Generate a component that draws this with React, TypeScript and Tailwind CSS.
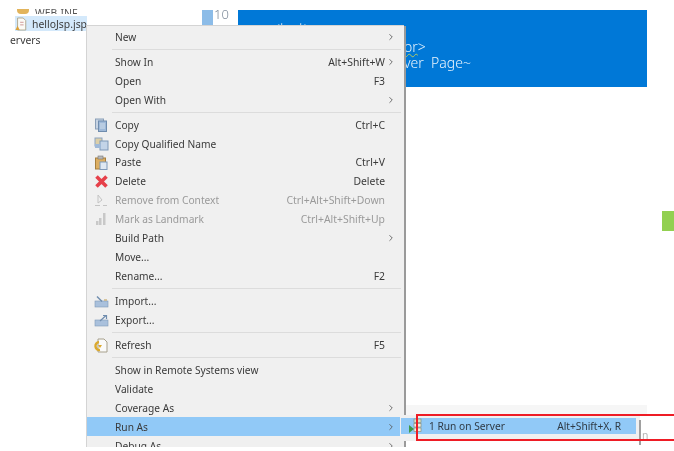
import React from "react";
import { ChevronRight } from "lucide-react";

type Item = { label: string; keys?: string; arrow?: boolean; off?: boolean; active?: boolean; icon?: React.ReactNode };

function CopyIcon() {
  return (
    <svg width="14" height="14" viewBox="0 0 14 14">
      <rect x="1.5" y="1" width="8" height="10" fill="#c6d3e3" stroke="#8a9fb8" />
      <rect x="4.5" y="3" width="8" height="10.5" fill="#9fb9d8" stroke="#6f8cae" />
      <path d="M6 6 H11 M6 8 H11 M6 10 H11" stroke="#dfe8f2" strokeWidth="0.8" />
    </svg>
  );
}
function CopyNameIcon() {
  return (
    <svg width="15" height="14" viewBox="0 0 15 14">
      <rect x="1" y="1" width="7" height="8" fill="#dccfa8" stroke="#8ca3c0" />
      <rect x="6" y="4" width="8" height="9" fill="#c3d4e8" stroke="#7f99b8" />
      <rect x="1" y="7" width="6" height="4" fill="#9fb9d8" />
    </svg>
  );
}
function PasteIcon() {
  return (
    <svg width="14" height="15" viewBox="0 0 14 15">
      <rect x="1.5" y="3" width="10" height="11" fill="#dcae62" stroke="#a77f3d" />
      <rect x="4" y="1" width="5" height="3" fill="#b9b9b9" stroke="#777" strokeWidth="0.6" />
      <rect x="6" y="7" width="7" height="7.5" fill="#dfe8f2" stroke="#7f99b8" />
    </svg>
  );
}
function DeleteIcon() {
  return (
    <svg width="13" height="13" viewBox="0 0 13 13">
      <path d="M1.5 1.5 L11.5 11.5 M11.5 1.5 L1.5 11.5" stroke="#e6404a" strokeWidth="3.6" />
    </svg>
  );
}
function RemoveIcon() {
  return (
    <svg width="14" height="13" viewBox="0 0 14 13" fill="none" stroke="#c4c4c4">
      <path d="M4 1 L8 6 L4 9 Z" />
      <path d="M1 11.5 H6 M9 11.5 H13" />
    </svg>
  );
}
function LandmarkIcon() {
  return (
    <svg width="12" height="14" viewBox="0 0 12 14" fill="#c8c8c8">
      <rect x="8" y="1" width="2.5" height="12" />
      <rect x="4" y="6" width="2.5" height="7" />
      <rect x="1" y="9" width="2.5" height="4" />
    </svg>
  );
}
function ImportIcon() {
  return (
    <svg width="15" height="13" viewBox="0 0 15 13">
      <rect x="1" y="6" width="13" height="6" fill="#a9c0dc" stroke="#7f99b8" strokeWidth="0.6" />
      <path d="M3 1.5 L8 6.5" stroke="#6f8cae" strokeWidth="1.4" fill="none" />
      <path d="M10 5 L13 5" stroke="#c8a867" strokeWidth="1.2" />
    </svg>
  );
}
function ExportIcon() {
  return (
    <svg width="15" height="13" viewBox="0 0 15 13">
      <rect x="1" y="6" width="13" height="6" fill="#a9c0dc" stroke="#7f99b8" strokeWidth="0.6" />
      <path d="M6 7 L12 1.5 M9 1.5 H12.5 V5" stroke="#6f8cae" strokeWidth="1.2" fill="none" />
    </svg>
  );
}
function RefreshIcon() {
  return (
    <svg width="14" height="15" viewBox="0 0 14 15">
      <path d="M4 1 H10 L13 4 V14 H4 Z" fill="#fafafa" stroke="#a7a08c" />
      <path d="M5 4 A4 4 0 1 0 6 12" fill="none" stroke="#dba92e" strokeWidth="2.4" />
      <path d="M4 7 L8 7 L6 10 Z" fill="#dba92e" />
    </svg>
  );
}
function JspIcon() {
  return (
    <svg width="14" height="16" viewBox="0 0 14 16">
      <path d="M3 1 H9.5 L12.5 4 V15 H3 Z" fill="#fbfaf5" stroke="#a99f83" />
      <path d="M6 6 H10 M6 9 H10" stroke="#c98a8a" />
      <path d="M0.5 15 L3 10 L5.5 15 Z" fill="#dca23a" />
    </svg>
  );
}
function ServerIcon() {
  return (
    <svg width="15" height="16" viewBox="0 0 15 16">
      <rect x="6" y="1" width="7" height="3.5" fill="#d9e4c8" stroke="#8b8f7a" strokeWidth="0.7" />
      <rect x="6" y="5.5" width="7" height="3.5" fill="#f4f1e2" stroke="#8b8f7a" strokeWidth="0.7" />
      <rect x="6" y="10" width="7" height="3.5" fill="#f4f1e2" stroke="#8b8f7a" strokeWidth="0.7" />
      <path d="M1 7 L6 11 L1 15 Z" fill="#3f9a4a" />
    </svg>
  );
}

const groups: Item[][] = [
  [{ label: "New", arrow: true }],
  [
    { label: "Show In", keys: "Alt+Shift+W", arrow: true },
    { label: "Open", keys: "F3" },
    { label: "Open With", arrow: true },
  ],
  [
    { label: "Copy", keys: "Ctrl+C", icon: <CopyIcon /> },
    { label: "Copy Qualified Name", icon: <CopyNameIcon /> },
    { label: "Paste", keys: "Ctrl+V", icon: <PasteIcon /> },
    { label: "Delete", keys: "Delete", icon: <DeleteIcon /> },
    { label: "Remove from Context", keys: "Ctrl+Alt+Shift+Down", off: true, icon: <RemoveIcon /> },
    { label: "Mark as Landmark", keys: "Ctrl+Alt+Shift+Up", off: true, icon: <LandmarkIcon /> },
    { label: "Build Path", arrow: true },
    { label: "Move..." },
    { label: "Rename...", keys: "F2" },
  ],
  [
    { label: "Import...", icon: <ImportIcon /> },
    { label: "Export...", icon: <ExportIcon /> },
  ],
  [{ label: "Refresh", keys: "F5", icon: <RefreshIcon /> }],
  [
    { label: "Show in Remote Systems view" },
    { label: "Validate" },
    { label: "Coverage As", arrow: true },
    { label: "Run As", arrow: true, active: true },
    { label: "Debug As", arrow: true },
  ],
];

function Row({ item }: { item: Item }) {
  return (
    <div className={`flex h-[18.95px] items-center ${item.active ? "bg-[#91c9f7]" : ""} ${item.off ? "text-[#9a9a9a]" : "text-[#3a3a3a]"}`}>
      <span className="flex w-[28px] shrink-0 justify-center">{item.icon}</span>
      <span className="flex-1 whitespace-nowrap text-[10.2px]">{item.label}</span>
      <span className="whitespace-nowrap">{item.keys}</span>
      <span className="mr-[7px] flex w-[12px] shrink-0 justify-center">
        {item.arrow && <ChevronRight size={10} strokeWidth={2} className="text-[#555]" />}
      </span>
    </div>
  );
}

export default function App() {
  return (
    <div className="relative h-[451px] w-[674px] overflow-hidden bg-white font-['Noto_Sans','Noto_Sans_CJK_KR',sans-serif] text-[10.4px] leading-none blur-[0.5px]">
      <div className="flex h-full">
        {/* project tree */}
        <div className="w-[202px] shrink-0 pt-[8px] text-[#3c3c3c]">
          <div className="flex h-[6px] items-end overflow-hidden pl-[17px]">
            <span className="mr-[6px] h-[5px] w-[12px] rounded-b-sm bg-[#e2b45c]" />
            <span className="translate-y-[4px] text-[#555]">WEB-INF</span>
          </div>
          <div className="ml-[15px] mt-[2px] flex h-[15px] w-[72px] items-center gap-[5px] bg-[#d4e9fb]">
            <JspIcon />
            <span className="translate-y-[0.5px]">helloJsp.jsp</span>
          </div>
          <div className="mt-[2px] h-[14px] pl-[10px] leading-[14px]">ervers</div>
        </div>
        {/* line numbers */}
        <div className="mt-[10px] h-[15px] w-[36px] shrink-0 overflow-hidden">
          <div className="flex">
            <span className="h-[15px] w-[11px] bg-[#8cbce8]" />
            <div className="ml-[1px] text-[13px] font-light leading-[15px] text-[#7d8a99]">
              <div className="-mt-[3px]">10</div>
              <div>11</div>
            </div>
          </div>
        </div>
        {/* selected source */}
        <div className="mt-[10px] h-[77px] w-[409px] shrink-0 bg-[#0078d7] pl-[34px] text-[14px] font-light leading-[16px] text-[#e8f3fc]">
          <div className="h-[10px] pt-[10px]">&lt;test&gt;</div>
          <div className="ml-[132px] mt-[19px] h-[16px]">
            <span className="underline decoration-[#b6c860] decoration-wavy decoration-[0.5px]">or</span>&gt;
          </div>
          <div className="ml-[132px] whitespace-pre">ver  Page~</div>
        </div>
      </div>

      {/* right side marker */}
      <div className="absolute left-[662px] top-[211px] h-[20px] w-[12px] bg-[#92d050]" />

      {/* context menu */}
      <div className="absolute left-[86px] top-[25px] h-[422px] w-[318px] overflow-hidden border-l border-t border-[#d4d4d4] bg-[#f0f0f0] pt-[1.5px]">
        {groups.map((g, i) => (
          <div key={i}>
            {i > 0 && (
              <div className="flex h-[6px] items-center pl-[25px] pr-[3px]">
                <div className="h-px w-full bg-[#dcdcdc]" />
              </div>
            )}
            {g.map((item) => (
              <Row key={item.label} item={item} />
            ))}
          </div>
        ))}
      </div>
      <div className="absolute left-[404px] top-[26px] h-[421px] w-[2px] bg-[#9a9a9a]" />

      {/* Run As submenu */}
      <div className="absolute left-[406px] top-[405px] h-[10px] w-[241px] bg-[#f6f6f6]" />
      <div className="absolute left-[400px] top-[415px] h-[26px] w-[240px] bg-[#f0f0f0] px-[1px] pt-[3px]">
        <div className="flex h-[16px] w-[235px] items-center bg-[#91c9f7] text-[10.2px] text-[#2f3a45]">
          <span className="flex w-[28px] justify-center"><ServerIcon /></span>
          <span className="flex-1">1 Run on Server</span>
          <span className="mr-[15px]">Alt+Shift+X, R</span>
        </div>
      </div>
      <div className="absolute left-[639px] top-[420px] h-[25px] w-[2px] bg-[#a0a0a0]" />
      <div className="absolute left-[642px] top-[430px] text-[#b5b5b5]">n</div>

      {/* annotation */}
      <div className="absolute left-[416px] top-[414px] h-[27px] w-[270px] border-2 border-[#ee1c25]" />
    </div>
  );
}
